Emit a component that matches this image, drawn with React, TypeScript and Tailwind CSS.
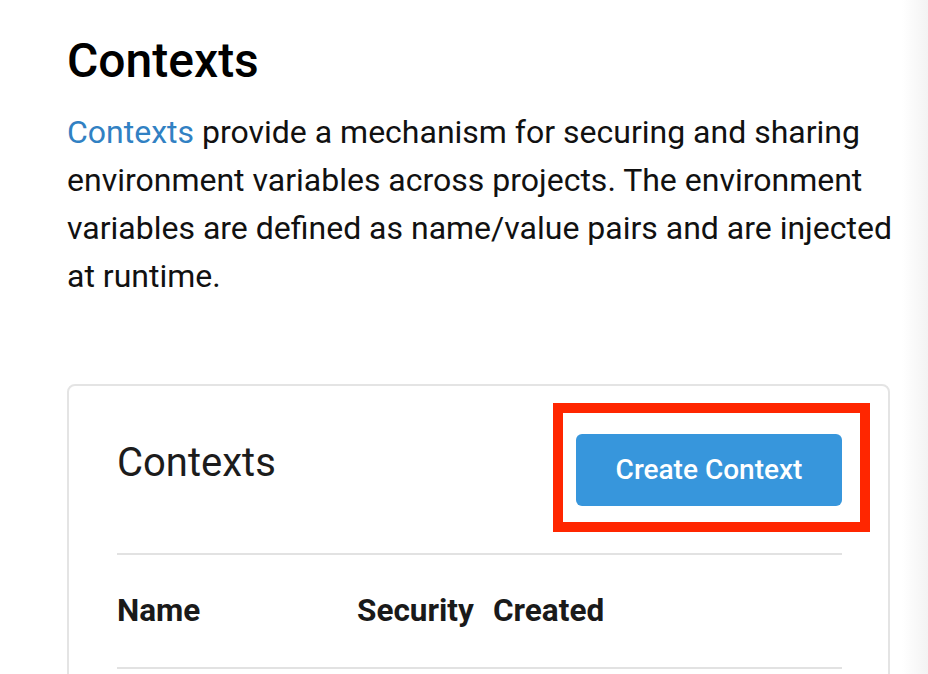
import { useState } from 'react';

const columns = [
  { label: 'Name', width: 'w-[240px]' },
  { label: 'Security', width: 'w-[136px]' },
  { label: 'Created', width: 'w-auto' },
];

export default function App() {
  const [contexts] = useState<string[]>([]);

  return (
    <div className="relative min-h-[674px] w-[928px] overflow-hidden bg-white font-['Roboto',sans-serif]">
      {/* faint shade on the right edge */}
      <div className="pointer-events-none absolute right-0 top-0 h-full w-[26px] bg-gradient-to-r from-white to-[#f3f3f3]" />

      <div className="relative pl-[67px] pr-[30px] pt-[30px]">
        <h1 className="text-[48px] font-medium leading-[62px] text-black">Contexts</h1>
        <p className="mt-[16px] text-[32px] leading-[48px] text-[#111]">
          <a href="#" className="text-[#3181c3]">Contexts</a> provide a mechanism for securing and sharing
          environment variables across projects. The environment variables are defined as name/value pairs and
          are injected at runtime.
        </p>

        <section className="mt-[84px] w-[823px] rounded-[8px] border-2 border-[#e4e4e4] bg-white pl-[48px] pr-[46px]">
          <div className="relative flex h-[167px] items-center justify-between">
            <h2 className="mb-[14px] text-[40px] font-normal text-[#1c1c1c]">Contexts</h2>
            <button className="h-[72px] w-[266px] rounded-[6px] bg-[#3796dc] text-[28px] font-medium text-white">
              Create Context
            </button>
            {/* annotation box round the button */}
            <div className="pointer-events-none absolute right-[-28px] top-[17px] h-[129px] w-[317px] border-[10px] border-[#ff2600]" />
          </div>
          <div className="border-t-2 border-[#e2e2e2]">
            <div className="flex h-[112px] items-center text-[31.5px] font-bold text-[#1a1a1a]">
              {columns.map((c) => (
                <div key={c.label} className={c.width}>{c.label}</div>
              ))}
            </div>
            <div className="border-t-2 border-[#e2e2e2]">
              {contexts.map((name) => (
                <div key={name} className="py-4 text-[24px]">{name}</div>
              ))}
              <div className="h-[40px]" />
            </div>
          </div>
        </section>
      </div>
    </div>
  );
}
